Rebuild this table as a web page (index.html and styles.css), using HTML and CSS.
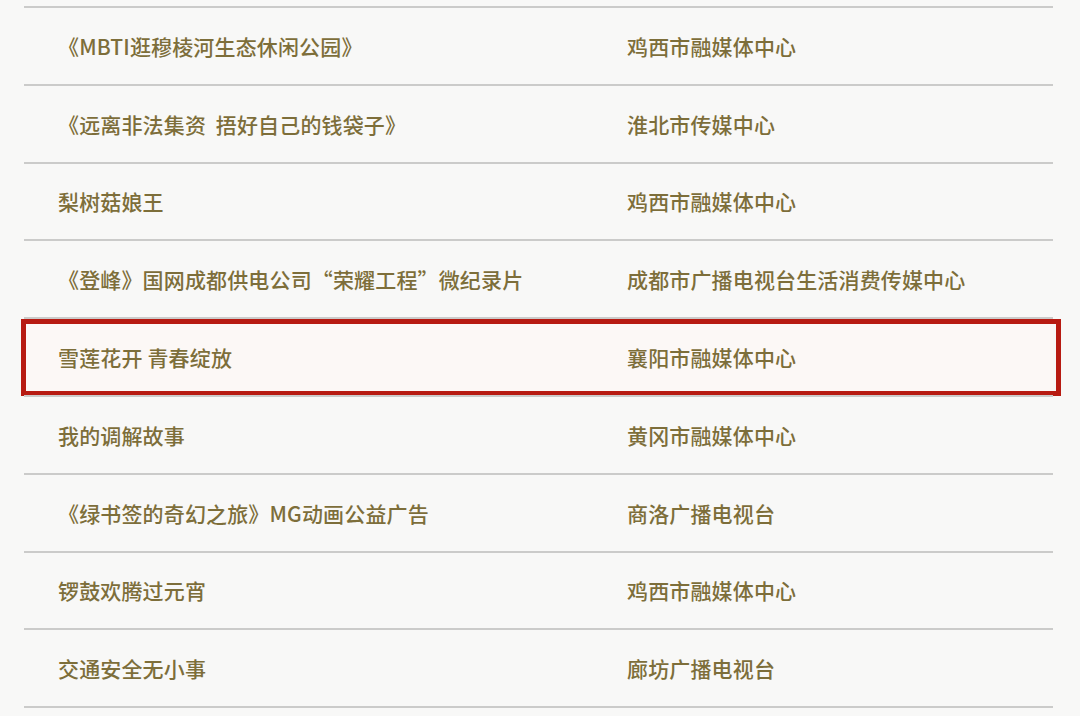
FILE: index.html
```html
<!DOCTYPE html>
<html lang="zh-CN">
<head>
<meta charset="utf-8">
<title>作品列表</title>
<link rel="stylesheet" href="styles.css">
</head>
<body>
<div class="table">
  <div class="row"><div class="title">《MBTI逛穆棱河生态休闲公园》</div><div class="org">鸡西市融媒体中心</div></div>
  <div class="row"><div class="title">《远离非法集资&nbsp; 捂好自己的钱袋子》</div><div class="org">淮北市传媒中心</div></div>
  <div class="row"><div class="title">梨树菇娘王</div><div class="org">鸡西市融媒体中心</div></div>
  <div class="row"><div class="title">《登峰》国网成都供电公司“荣耀工程”微纪录片</div><div class="org">成都市广播电视台生活消费传媒中心</div></div>
  <div class="row highlighted"><div class="title">雪莲花开 青春绽放</div><div class="org">襄阳市融媒体中心</div><div class="mark"></div></div>
  <div class="row"><div class="title">我的调解故事</div><div class="org">黄冈市融媒体中心</div></div>
  <div class="row"><div class="title">《绿书签的奇幻之旅》MG动画公益广告</div><div class="org">商洛广播电视台</div></div>
  <div class="row"><div class="title">锣鼓欢腾过元宵</div><div class="org">鸡西市融媒体中心</div></div>
  <div class="row last"><div class="title">交通安全无小事</div><div class="org">廊坊广播电视台</div></div>
</div>
</body>
</html>
```
FILE: styles.css
```css
html, body {
  margin: 0;
  padding: 0;
  background: #f8f8f7;
}
body {
  width: 1080px;
  height: 716px;
  overflow: hidden;
  font-family: "Noto Sans CJK SC", "Noto Sans", sans-serif;
}
.table {
  margin: 6px 0 0 24px;
  width: 1029px;
}
.row {
  position: relative;
  display: flex;
  align-items: center;
  height: 75.8px;
  border-top: 2px solid #cbcbca;
  color: #7d6e3a;
  font-size: 21px;
  font-weight: 500;
  letter-spacing: 0.15px;
}
.row.last {
  border-bottom: 2px solid #cbcbca;
}
.title {
  width: 603px;
  padding-left: 34px;
  box-sizing: border-box;
  white-space: nowrap;
}
.org {
  white-space: nowrap;
}
.highlighted {
  background: #fcf8f6;
}
.mark {
  position: absolute;
  left: -3px;
  top: 0;
  width: 1040px;
  height: 77px;
  border: 5px solid #b71b12;
  box-sizing: border-box;
}
```
